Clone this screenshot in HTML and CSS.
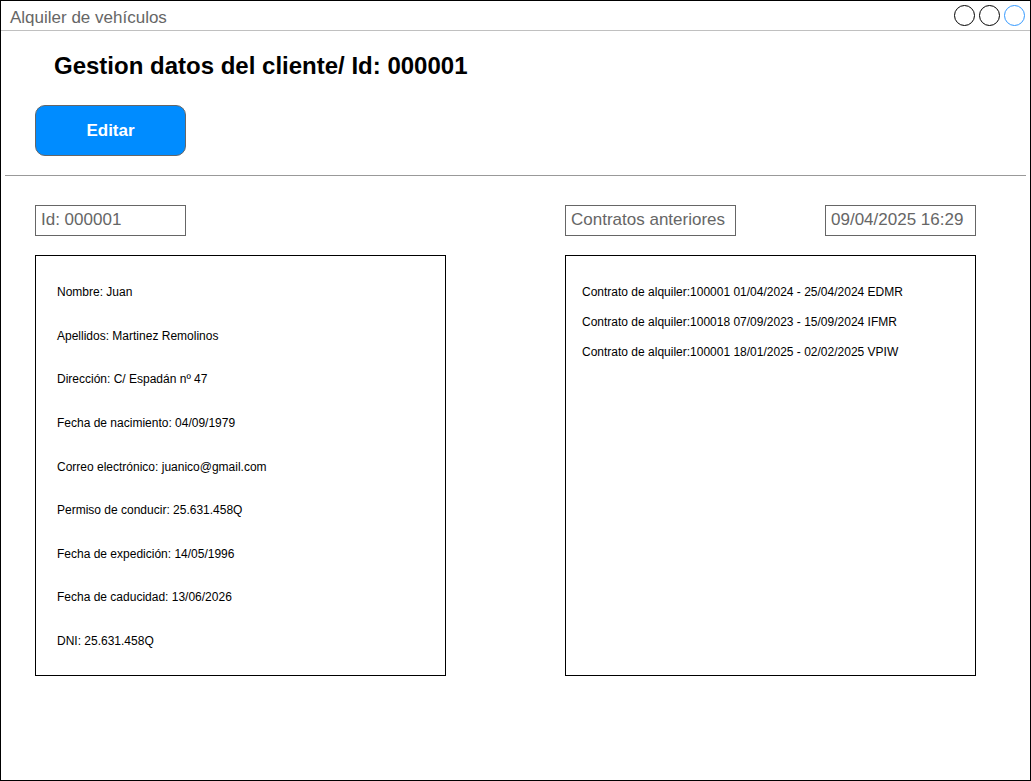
FILE: index.html
```html
<!DOCTYPE html>
<html lang="es">
<head>
<meta charset="utf-8">
<title>Alquiler de vehículos</title>
<link rel="stylesheet" href="styles.css">
</head>
<body>
<div class="window">
  <div class="titlebar">
    <span class="title">Alquiler de vehículos</span>
    <div class="controls">
      <span class="dot"></span>
      <span class="dot"></span>
      <span class="dot dot-blue"></span>
    </div>
  </div>
  <div class="content">
    <h1 class="heading">Gestion datos del cliente/ Id: 000001</h1>
    <button class="btn">Editar</button>
    <div class="divider"></div>
    <div class="grid">
      <div class="cell">
        <div class="field field-id">Id: 000001</div>
      </div>
      <div class="cell cell-right">
        <div class="field field-contratos">Contratos anteriores</div>
        <div class="field field-date">09/04/2025 16:29</div>
      </div>
      <div class="panel panel-left">
        <div class="row">Nombre: Juan</div>
        <div class="row">Apellidos: Martinez Remolinos</div>
        <div class="row">Dirección: C/ Espadán nº 47</div>
        <div class="row">Fecha de nacimiento: 04/09/1979</div>
        <div class="row">Correo electrónico: juanico@gmail.com</div>
        <div class="row">Permiso de conducir: 25.631.458Q</div>
        <div class="row">Fecha de expedición: 14/05/1996</div>
        <div class="row">Fecha de caducidad: 13/06/2026</div>
        <div class="row">DNI: 25.631.458Q</div>
      </div>
      <div class="panel panel-right">
        <div class="row">Contrato de alquiler:100001 01/04/2024 - 25/04/2024 EDMR</div>
        <div class="row">Contrato de alquiler:100018 07/09/2023 - 15/09/2024 IFMR</div>
        <div class="row">Contrato de alquiler:100001 18/01/2025 - 02/02/2025 VPIW</div>
      </div>
    </div>
  </div>
</div>
</body>
</html>
```

FILE: styles.css
```css
* { box-sizing: border-box; }
html, body { margin: 0; padding: 0; background: #fff; }
body { font-family: "Liberation Sans", Arial, sans-serif; }

.window {
  width: 1031px;
  height: 781px;
  border: 1px solid #000;
  overflow: hidden;
}

.titlebar {
  height: 30px;
  border-bottom: 1px solid #c0c0c0;
  display: flex;
  align-items: center;
  justify-content: space-between;
  padding: 0 5px 0 9px;
}
.title {
  font-size: 17px;
  color: #666;
  line-height: 20px;
  padding-top: 5px;
}
.controls { display: flex; gap: 4px; align-items: center; }
.dot {
  width: 21px;
  height: 21px;
  border: 1px solid #000;
  border-radius: 50%;
  display: block;
}
.dot-blue { border-color: #3399ff; }

.content { padding-top: 20px; }

.heading {
  margin: 0 0 24px 53px;
  font-size: 24px;
  line-height: 30px;
  font-weight: bold;
  color: #000;
}

.btn {
  display: block;
  margin-left: 34px;
  width: 151px;
  height: 51px;
  background: #008cff;
  border: 1px solid #666;
  border-radius: 10px;
  color: #fff;
  font-family: "Liberation Sans", Arial, sans-serif;
  font-size: 17px;
  font-weight: bold;
  padding: 0;
}

.divider {
  margin: 19px 4px 0 4px;
  height: 1px;
  background: #999;
}

.grid {
  margin-top: 29px;
  padding-left: 34px;
  display: grid;
  grid-template-columns: 411px 411px;
  column-gap: 119px;
  row-gap: 19px;
}

.cell-right { display: flex; justify-content: space-between; }

.field {
  height: 31px;
  border: 1px solid #666;
  color: #666;
  font-size: 17px;
  line-height: 28px;
  padding-left: 5px;
}
.field-id { width: 151px; }
.field-contratos { width: 171px; }
.field-date { width: 151px; }

.panel {
  height: 421px;
  border: 1px solid #000;
  font-size: 12px;
  color: #000;
}
.panel-left { padding: 15px 0 0 21px; }
.panel-left .row { line-height: 43.625px; }
.panel-right { padding: 21px 0 0 16px; }
.panel-right .row { line-height: 30px; }
```
